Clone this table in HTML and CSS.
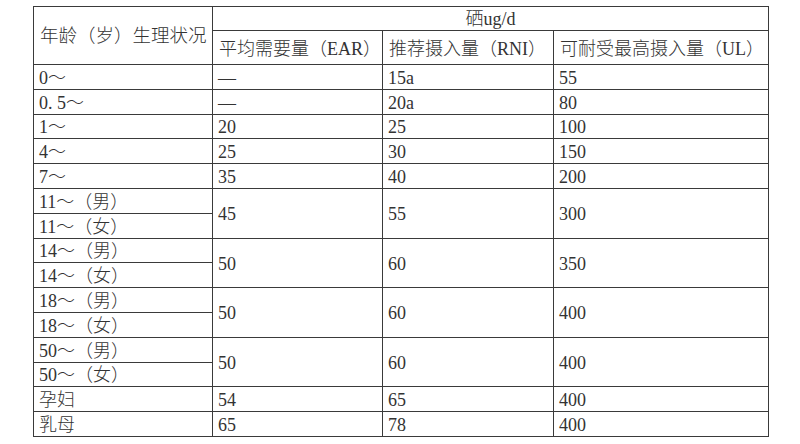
FILE: index.html
```html
<!DOCTYPE html>
<html lang="zh-CN">
<head>
<meta charset="utf-8">
<title>硒 ug/d</title>
<link rel="stylesheet" href="styles.css">
</head>
<body>
<table class="se-table">
  <colgroup>
    <col class="c1"><col class="c2"><col class="c3"><col class="c4">
  </colgroup>
  <thead>
    <tr class="h1">
      <th rowspan="2" class="age-head">年龄（岁）生理状况</th>
      <th colspan="3" class="unit">硒ug/d</th>
    </tr>
    <tr class="h2">
      <th>平均需要量（EAR）</th>
      <th>推荐摄入量（RNI）</th>
      <th>可耐受最高摄入量（UL）</th>
    </tr>
  </thead>
  <tbody>
    <tr><td>0～</td><td>—</td><td>15a</td><td>55</td></tr>
    <tr><td>0. 5～</td><td>—</td><td>20a</td><td>80</td></tr>
    <tr><td>1～</td><td>20</td><td>25</td><td>100</td></tr>
    <tr><td>4～</td><td>25</td><td>30</td><td>150</td></tr>
    <tr><td>7～</td><td>35</td><td>40</td><td>200</td></tr>
    <tr><td>11～（男）</td><td rowspan="2">45</td><td rowspan="2">55</td><td rowspan="2">300</td></tr>
    <tr><td>11～（女）</td></tr>
    <tr><td>14～（男）</td><td rowspan="2">50</td><td rowspan="2">60</td><td rowspan="2">350</td></tr>
    <tr><td>14～（女）</td></tr>
    <tr><td>18～（男）</td><td rowspan="2">50</td><td rowspan="2">60</td><td rowspan="2">400</td></tr>
    <tr><td>18～（女）</td></tr>
    <tr><td>50～（男）</td><td rowspan="2">50</td><td rowspan="2">60</td><td rowspan="2">400</td></tr>
    <tr><td>50～（女）</td></tr>
    <tr><td>孕妇</td><td>54</td><td>65</td><td>400</td></tr>
    <tr><td>乳母</td><td>65</td><td>78</td><td>400</td></tr>
  </tbody>
</table>
</body>
</html>
```
FILE: styles.css
```css
html, body {
  margin: 0;
  padding: 0;
  background: #fff;
}
body {
  padding: 6px 0 0 33px;
  font-family: "Liberation Serif", "Noto Sans CJK SC", serif;
  color: #333;
}
.se-table {
  border-collapse: collapse;
  table-layout: fixed;
  width: 735px;
  border: 1px solid #3a3a3a;
}
.c1 { width: 179px; }
.c2 { width: 170px; }
.c3 { width: 171px; }
.c4 { width: 215px; }
.se-table th,
.se-table td {
  border: 1px solid #3a3a3a;
  padding: 0 0 0 5px;
  font-weight: 300;
  text-align: left;
  vertical-align: middle;
  white-space: nowrap;
  overflow: hidden;
  line-height: 20px;
}
.se-table th {
  font-size: 18px;
  padding-left: 6px;
}
.se-table th.age-head {
  font-size: 18.5px;
}
.se-table td {
  font-size: 18px;
  padding-top: 2px;
}
.se-table th.unit {
  text-align: center;
  padding-left: 0;
}
.h1 { height: 24px; }
.h2 { height: 34px; }
.h2 th { padding-top: 3px; }
.se-table tbody tr { height: 24.8px; }
```
